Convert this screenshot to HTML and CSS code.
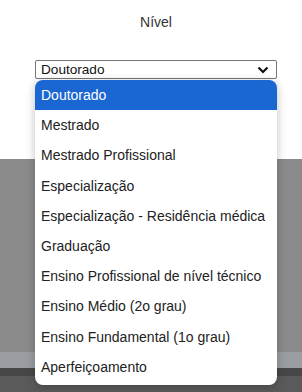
FILE: index.html
```html
<!DOCTYPE html>
<html lang="pt">
<head>
    <meta charset="UTF-8">
    <meta name="viewport" content="width=device-width, initial-scale=1">
    <title>Nível</title>
    <link rel="stylesheet" href="styles.css">
</head>
<body>
    <div class="top">
        <label class="label" for="nivel">Nível</label>
        <div class="field">
            <div class="select" id="nivel">
                <span>Doutorado</span>
                <svg class="chevron" width="12" height="8" viewBox="0 0 12 8">
                    <path d="M1.5 1.5 L6 6 L10.5 1.5" fill="none" stroke="#111" stroke-width="2.2"/>
                </svg>
            </div>
            <ul class="options">
                <li class="selected">Doutorado</li>
                <li>Mestrado</li>
                <li>Mestrado Profissional</li>
                <li>Especialização</li>
                <li>Especialização - Residência médica</li>
                <li>Graduação</li>
                <li>Ensino Profissional de nível técnico</li>
                <li>Ensino Médio (2o grau)</li>
                <li>Ensino Fundamental (1o grau)</li>
                <li>Aperfeiçoamento</li>
            </ul>
        </div>
    </div>
    <div class="shade"></div>
    <div class="band"></div>
    <div class="bar"></div>
    <div class="foot"></div>
</body>
</html>
```

FILE: styles.css
```css
*, *:before, *:after {
    margin: 0;
    padding: 0;
    box-sizing: border-box;
}
body {
    font-family: "Liberation Sans", Arial, sans-serif;
    font-size: 14px;
    color: #222;
    background: #5a5a5a;
}
.top {
    height: 159px;
    background: #fff;
    padding: 14px 0 0 10px;
    display: flex;
    flex-direction: column;
    align-items: center;
}
.label {
    display: block;
    line-height: 16px;
    color: #333;
}
.field {
    position: relative;
    margin-top: 30px;
    width: 242px;
}
.select {
    height: 19px;
    border: 1px solid #767676;
    border-radius: 2px;
    display: flex;
    align-items: center;
    justify-content: space-between;
    padding: 0 7px 0 5px;
    font-size: 13.6px;
    color: #111;
}
.chevron {
    display: block;
}
.options {
    position: absolute;
    top: 20px;
    left: 0;
    width: 242px;
    list-style: none;
    background: #fff;
    border-radius: 8px;
    overflow: hidden;
    padding-bottom: 3px;
    box-shadow: 0 2px 10px rgba(0, 0, 0, 0.25);
    z-index: 2;
}
.options li {
    height: 30.2px;
    line-height: 30px;
    padding-left: 6px;
    white-space: nowrap;
    color: #222;
}
.options li.selected {
    background: #1a66d2;
    color: #fff;
}
.shade {
    height: 193px;
    background: #8b8b8b;
}
.band {
    height: 16px;
    background: #9a9ea2;
}
.bar {
    height: 8px;
    background: #474747;
}
.foot {
    height: 16px;
    background: #5a5a5a;
}
```
